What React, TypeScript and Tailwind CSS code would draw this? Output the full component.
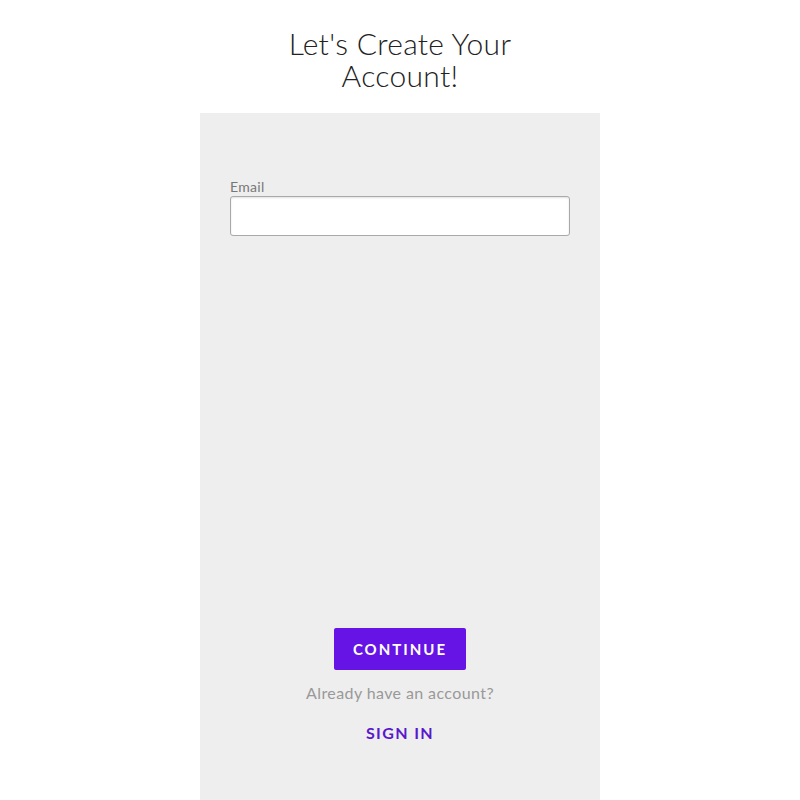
export default function App() {
  return (
    <div className="min-h-[800px] w-full bg-white flex flex-col items-center" style={{ fontFamily: "Lato, 'Noto Sans', sans-serif" }}>
      <h1 className="pt-[27px] text-center text-[30px] leading-[32px] font-light text-[#222] tracking-[0.3px]">
        <span className="block">Let's Create Your</span>
        <span className="block">Account!</span>
      </h1>
      <div className="mt-[22px] w-[400px] h-[687px] bg-[#eeeeee] flex flex-col px-[30px]">
        <label className="mt-[66px] text-[14px] leading-[16px] text-[#777] tracking-[0.3px]">Email</label>
        <input
          type="email"
          className="mt-[1px] h-[40px] w-full bg-white border border-[#a9a9a9] rounded-[3px] shadow-[inset_0_1px_2px_rgba(0,0,0,0.12)] outline-none"
        />
        <div className="flex-1" />
        <div className="flex flex-col items-center mb-[57px]">
          <button className="w-[132px] h-[42px] bg-[#6614e6] rounded-[2px] text-white text-[15px] font-bold tracking-[2px]">
            CONTINUE
          </button>
          <p className="mt-[13px] text-[16px] leading-[20px] text-[#999] tracking-[0.4px]">Already have an account?</p>
          <a className="mt-[20px] text-[16px] leading-[20px] font-bold tracking-[1.4px] text-[#5a17cc]">SIGN IN</a>
        </div>
      </div>
    </div>
  );
}
